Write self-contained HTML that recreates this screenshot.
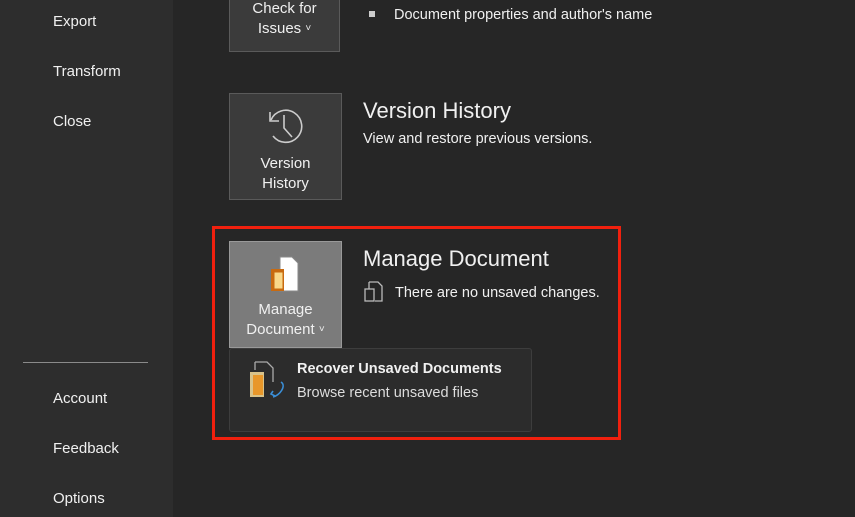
<!DOCTYPE html>
<html><head><style>
body{margin:0;width:855px;height:517px;overflow:hidden;background:#262626;font-family:"Segoe UI","Liberation Sans",sans-serif;color:#fff;position:relative}
.side{position:absolute;left:0;top:0;width:173px;height:517px;background:#2d2d2d}
.side div{position:absolute;left:53px;font-size:15px;line-height:20px;color:#f0f0f0}
.btn{position:absolute;left:229px;width:111px;background:#3b3b3b;border:1px solid #5a5a5a;text-align:center;font-size:15px;line-height:20px;color:#f0f0f0}
.t{position:absolute;font-size:14.5px;color:#f0f0f0;line-height:20px}
.h{position:absolute;font-size:22px;color:#f0f0f0;line-height:28px}
.cv{font-size:10px;vertical-align:2px}
</style></head><body>
<div class="side">
<div style="top:12px">Export</div>
<div style="top:62px">Transform</div>
<div style="top:112px">Close</div>
<div style="left:23px;top:362px;width:125px;height:1px;background:#8a8a8a"></div>
<div style="top:389px">Account</div>
<div style="top:439px">Feedback</div>
<div style="top:489px">Options</div>
</div>
<div class="btn" style="top:-10px;padding-top:8px;box-sizing:border-box;height:62px">Check for<br>Issues <span class="cv">˅</span></div>
<div style="position:absolute;left:369px;top:11px;width:6px;height:6px;background:#ccc"></div>
<div class="t" style="left:394px;top:5px">Document properties and author's name</div>
<div class="btn" style="top:93px;height:105px">
<svg width="40" height="40" viewBox="0 0 40 40" style="margin-top:12px"><path d="M5 14 A16 16 0 1 1 7 30" fill="none" stroke="#ccc" stroke-width="1.6"/><path d="M4 6 L4 15 L13 15" fill="none" stroke="#ccc" stroke-width="1.6"/><path d="M18 9 L18 22 L26 31" fill="none" stroke="#ccc" stroke-width="1.6"/></svg>
<div style="margin-top:2px">Version<br>History</div></div>
<div class="h" style="left:363px;top:97px">Version History</div>
<div class="t" style="left:363px;top:129px">View and restore previous versions.</div>
<div class="btn" style="top:241px;height:105px;background:#7b7b7b;border-color:#999">
<svg width="40" height="40" viewBox="0 0 40 40" style="margin-top:12px"><path d="M14 3 L26 3 L32 9 L32 37 L14 37 Z" fill="#fff" stroke="#888"/><rect x="5" y="15" width="13" height="22" fill="#c86a10"/><rect x="8" y="18" width="9" height="17" fill="#f9d88a" stroke="#c86a10"/></svg>
<div style="margin-top:0px">Manage<br>Document <span class="cv">˅</span></div></div>
<div class="h" style="left:363px;top:245px">Manage Document</div>
<svg style="position:absolute;left:364px;top:281px" width="20" height="22" viewBox="0 0 20 22"><path d="M5 1 L14 1 L18 5 L18 20 L11 20 M5 1 L5 8" fill="none" stroke="#bbb" stroke-width="1.3"/><rect x="1" y="8" width="9" height="12" fill="none" stroke="#bbb" stroke-width="1.3"/></svg>
<div class="t" style="left:395px;top:283px">There are no unsaved changes.</div>
<div style="position:absolute;left:229px;top:348px;width:301px;height:82px;background:#2c2c2c;border:1px solid #3d3d3d;border-radius:3px"></div>
<svg style="position:absolute;left:249px;top:360px" width="42" height="40" viewBox="0 0 42 40"><path d="M6 2 L18 2 L24 8 L24 22 M6 2 L6 10" fill="none" stroke="#aaa" stroke-width="1.3"/><rect x="1" y="12" width="14" height="25" fill="#d9c38a"/><rect x="4" y="15" width="10" height="20" fill="#e8972a"/><path d="M32 22 C38 26 30 36 24 37 M24 31 L22 34 L26 36" fill="none" stroke="#3a8fd8" stroke-width="1.6"/></svg>
<div class="t" style="left:297px;top:359px;font-weight:bold">Recover Unsaved Documents</div>
<div class="t" style="left:297px;top:383px;color:#ddd">Browse recent unsaved files</div>
<div style="position:absolute;left:212px;top:226px;width:403px;height:208px;border:3px solid #f0200e"></div>
</body></html>
